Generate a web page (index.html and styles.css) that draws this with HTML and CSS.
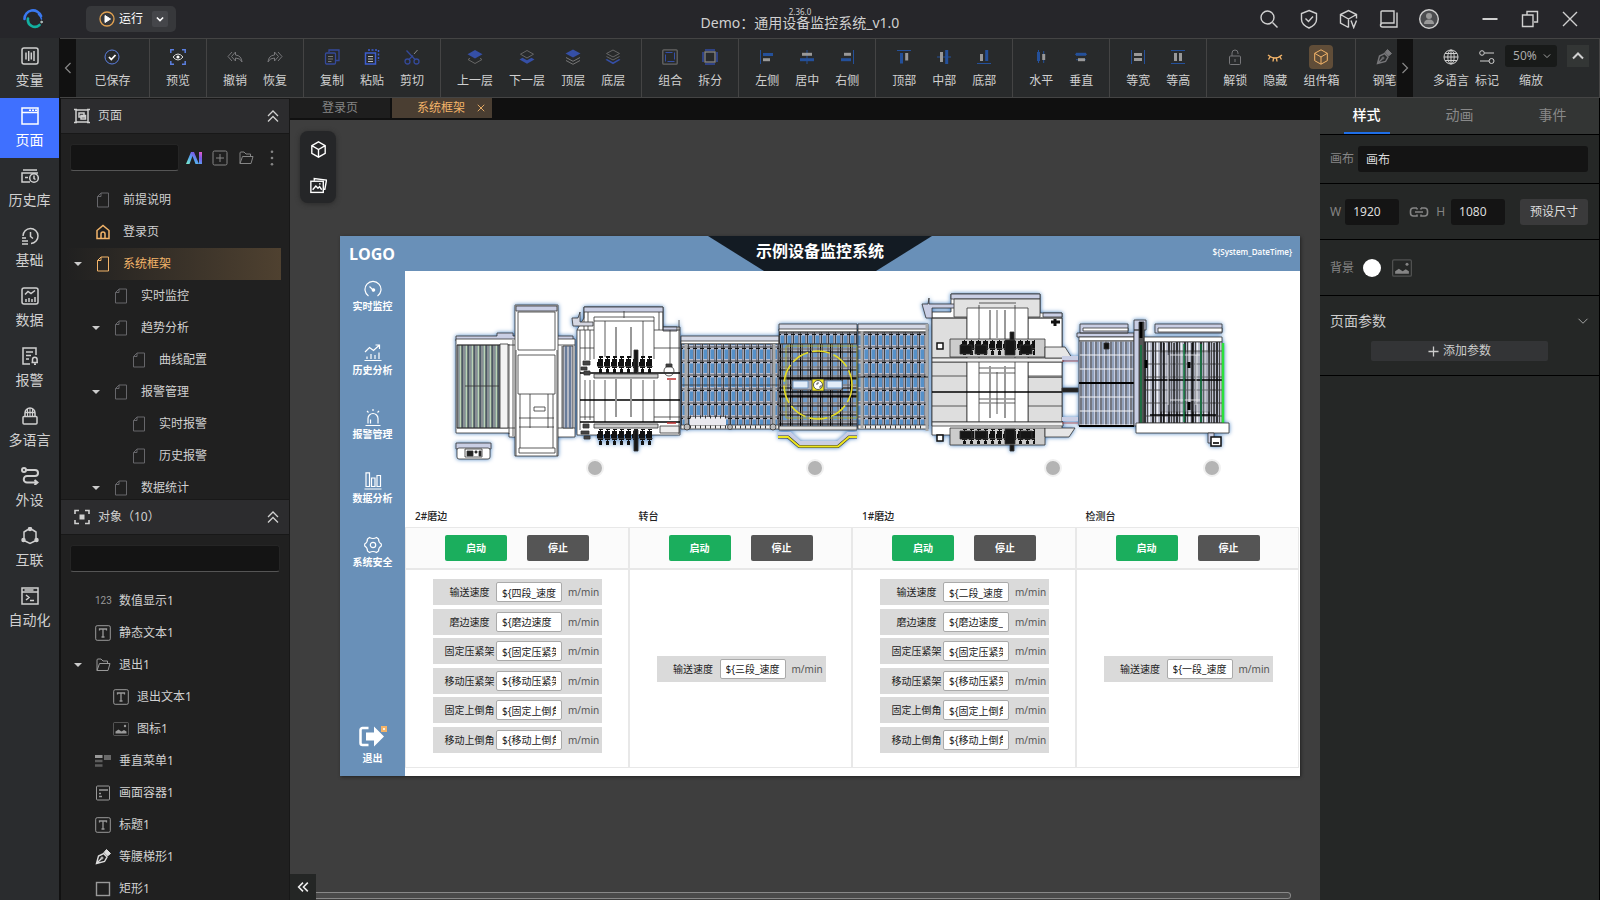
FILE: index.html
```html
<!DOCTYPE html>
<html lang="zh-CN">
<head>
  <meta charset="UTF-8">
  <title>Demo：通用设备监控系统_v1.0</title>
  <meta name="viewport" content="width=device-width, initial-scale=1.0">
  <link rel="stylesheet" href="styles.css">
</head>
<body>
  <!-- icon sprite -->
  <svg class="sprite" aria-hidden="true">
    <defs>
      <linearGradient id="ai-fill" x1="0" x2="1" y1="1" y2="0">
        <stop offset="0" stop-color="#7df0c8"/><stop offset=".4" stop-color="#56a8f0"/><stop offset=".7" stop-color="#7a5ae8"/><stop offset="1" stop-color="#f05ac8"/>
      </linearGradient>
    </defs>
    <symbol id="i-file" viewBox="0 0 16 16"><path d="M6 1h7.500v14h-11V4.500zM6 1v3.500H2.500" /></symbol>
    <symbol id="i-home" viewBox="0 0 16 16"><path d="M2 6.500L8 1.500l6 5V14.500H2zM6 14.500V10a2 2 0 0 1 4 0v4.500" stroke-width="1.500"/></symbol>
    <symbol id="i-text" viewBox="0 0 16 16"><rect x=".7" y=".7" width="14.600" height="14.600" rx="1.500"/><path d="M4.500 5.500V4h7v1.500M8 4v8M6.500 12h3" stroke-width="1.300"/></symbol>
    <symbol id="i-folder" viewBox="0 0 16 16"><path d="M2 13.500V3a1 1 0 0 1 1-1h3l2 2h4.500v2.500M2 13.500l2.500-7h10.500l-2 7z"/></symbol>
    <symbol id="i-image" viewBox="0 0 16 16"><rect x=".5" y="1.500" width="15" height="13" rx="1" opacity=".45"/><path d="M2.500 12.500v-2l3-2 3 2 2.500-1.500 2.500 1.500v2z" fill="currentColor" stroke="none"/><circle cx="12" cy="5" r="1.200" fill="currentColor" stroke="none"/></symbol>
    <symbol id="i-pen" viewBox="0 0 16 16"><path d="M1.500 14.500L3.500 7l5-2.500 3.500 3.500-2.500 4.500zM1.500 14.500L6.500 9.500" stroke-width="1.400"/><circle cx="7" cy="9" r="1"/><path d="M9 3.500l2.500-3 4 4-3 2.500z" fill="currentColor"/></symbol>
    <symbol id="i-rect" viewBox="0 0 16 16"><rect x="1.500" y="1.500" width="13" height="13" stroke-width="1.400"/></symbol>
    <symbol id="i-box" viewBox="0 0 16 16"><rect x="1.500" y="1" width="13" height="14" rx="1"/><path d="M4 5h9M4 8.500h2M4 11.500h3" stroke-width="1.400"/></symbol>
    <symbol id="i-vmenu" viewBox="0 0 16 16"><path d="M0 3.500h7.500" stroke-width="3"/><path d="M0 8h7.500M0 12.500h7.500" stroke-width="2.500" opacity=".5"/><path d="M9 4.500h7" stroke-width="5" opacity=".6"/></symbol>
    <symbol id="i-cube" viewBox="0 0 16 16"><path d="M8 .8l6.300 3.500v7.400L8 15.200l-6.300-3.500V4.300zM1.700 4.300L8 8l6.300-3.700M8 8v7.200"/></symbol>
    <symbol id="i-photos" viewBox="0 0 16 16"><path d="M4 3.500V1.500l11.500 1.500-1.500 8.500h-1.500"/><rect x=".8" y="4" width="11.700" height="10.500"/><path d="M2.500 12l3-3.500 2 2 1.500-1.500 2 3M8.500 6.500h1.500"/></symbol>
    <symbol id="i-plus-box" viewBox="0 0 16 16"><rect x="1" y="1" width="14" height="14" rx="1.500"/><path d="M8 4v8M4 8h8"/></symbol>
    <symbol id="i-dots" viewBox="0 0 16 16"><g fill="currentColor" stroke="none"><circle cx="8" cy="1.800" r="1.300"/><circle cx="8" cy="8" r="1.300"/><circle cx="8" cy="14.200" r="1.300"/></g></symbol>
    <symbol id="i-up2" viewBox="0 0 16 16"><path d="M3 8l5-5 5 5M3 13.500l5-5 5 5" stroke-width="1.300"/></symbol>
    <symbol id="i-down" viewBox="0 0 16 16"><path d="M3 5.500l5 5 5-5" stroke-width="1.500"/></symbol>
    <symbol id="i-up" viewBox="0 0 16 16"><path d="M3 10.500l5-5 5 5" stroke-width="2"/></symbol>
    <symbol id="i-left" viewBox="0 0 8 16"><path d="M6.500 3L1.500 8l5 5" stroke-width="1.200"/></symbol>
    <symbol id="i-right" viewBox="0 0 8 16"><path d="M1.500 3l5 5-5 5" stroke-width="1.200"/></symbol>
    <symbol id="i-close" viewBox="0 0 16 16"><path d="M1.500 1.500l13 13M14.500 1.500l-13 13" stroke-width="1.800"/></symbol>
    <symbol id="i-link" viewBox="0 0 20 12"><path d="M8 2H4.500a3 3 0 0 0-3 3v2a3 3 0 0 0 3 3H8V8.500M8 2v1.500M12 2h3.500a3 3 0 0 1 3 3v2a3 3 0 0 1-3 3H12V8.500M12 2v1.500M6 6h8" stroke-width="1.600"/></symbol>

    <symbol id="i-layer-up" viewBox="0 0 16 16"><path d="M1 10.500l7 4 7-4-2-1.200M1 10.500l2-1.200" stroke="#666"/><path d="M8 1l7.500 4.200L8 9.400.5 5.200z" fill="#354fa6" stroke="none"/></symbol>
    <symbol id="i-layer-down" viewBox="0 0 16 16"><path d="M8 1.500l6.500 3.700L8 9 1.500 5.200z" stroke="#666"/><path d="M.5 10.500l3-1.700L8 11.300l4.500-2.500 3 1.700L8 14.800z" fill="#354fa6" stroke="none"/></symbol>
    <symbol id="i-layer-top" viewBox="0 0 16 16"><path d="M1 8.500l7 3.800 7-3.800M1 11.500l7 3.800 7-3.800" stroke="#777"/><path d="M8 .5l7.500 4L8 8.500.5 4.500z" fill="#354fa6" stroke="none"/></symbol>
    <symbol id="i-layer-bottom" viewBox="0 0 16 16"><path d="M8 1l6.500 3.500L8 8 1.500 4.500zM1.500 7.500L8 11l6.500-3.500" stroke="#666"/><path d="M.5 10.800l1.500-.8 6 3.200 6-3.200 1.500.8L8 15.200z" fill="#354fa6" stroke="none"/></symbol>
    <symbol id="i-lock" viewBox="0 0 16 16"><rect x="2.500" y="7" width="11" height="8.500" rx="1"/><path d="M5 7V4a3 3 0 0 1 6 0v1M8 10v3"/></symbol>
    <symbol id="i-globe" viewBox="0 0 16 16"><circle cx="8" cy="8" r="7"/><ellipse cx="8" cy="8" rx="3.200" ry="7"/><path d="M1 8h14M2 4.500h12M2 11.500h12M8 1v14"/></symbol>
  </svg>

  <header class="titlebar">
    <svg class="brand" viewBox="0 0 20 20"><path d="M1.500 10a8.500 8.500 0 0 1 16.500-3" stroke="#3a78f0" stroke-width="2.600"/><path d="M15.500 5.500A8 8 0 0 1 18.500 10" stroke="#3a78f0" stroke-width="1.500"/><path d="M5 9.500a7 7 0 0 0 11.500 6.500" stroke="#12b0a0" stroke-width="2.600"/><circle cx="18.500" cy="13" r=".8" fill="#12b0a0"/></svg>
    <div class="run">
      <button class="run-btn" type="button">
        <svg class="icon" viewBox="0 0 16 16"><circle cx="8" cy="8" r="7" stroke="#e0a050" stroke-width="1.300"/><path d="M6 4.500l5.500 3.500L6 11.500z" fill="#fff"/></svg>运行
      </button>
      <button class="run-more" type="button" aria-label="更多"><svg class="icon-s" viewBox="0 0 16 16"><path d="M3 5.500l5 5 5-5" stroke-width="2.500"/></svg></button>
    </div>
    <div class="doc-title">
      <span class="version">2.36.0</span>
      <h1>Demo：通用设备监控系统_v1.0</h1>
    </div>
    <div class="window-actions">
      <button type="button" aria-label="搜索"><svg viewBox="0 0 20 20"><circle cx="8.500" cy="8.500" r="6.500"/><path d="M13.500 13.500l5 5"/></svg></button>
      <button type="button" aria-label="安全"><svg viewBox="0 0 20 20"><path d="M10 1.500l7.500 3v6q0 5-7.500 8.500-7.500-3.500-7.500-8.500v-6zM6.500 9.500L9.500 12.500l4.500-5"/></svg></button>
      <button type="button" aria-label="组件"><svg viewBox="0 0 20 20"><path d="M17.500 9.500V5.500L9.500 1.500l-8 4V14l8 4.500M1.500 5.500l8 4.500 8-4.500M9.500 10v8.500M12 11.500l2.700 7 2.800-7"/></svg></button>
      <button type="button" aria-label="文档"><svg viewBox="0 0 20 20"><path d="M2 16V3a1 1 0 0 1 1-1h12v12H3.500a1.500 1.500 0 0 0 0 4H18V3.500"/></svg></button>
      <button type="button" aria-label="账户"><svg viewBox="0 0 20 20"><circle cx="10" cy="10" r="9.300" fill="#4c4d50"/><circle cx="10" cy="7" r="3" fill="#999" stroke="none"/><path d="M5 15q0-4.500 5-4.500t5 4.500z" fill="#999" stroke="none"/></svg></button>
      <button class="win-first" type="button" aria-label="最小化"><svg viewBox="0 0 20 20"><path d="M2.500 10h15" stroke-width="2"/></svg></button>
      <button type="button" aria-label="还原"><svg viewBox="0 0 20 20"><path d="M7 6V2.500h10.500v10.500H14M2.500 6H13v11.500H2.500z"/></svg></button>
      <button type="button" aria-label="关闭"><svg viewBox="0 0 20 20"><path d="M3 3l14 14M17 3L3 17"/></svg></button>
    </div>
  </header>

  <div class="app">
    <nav class="side-nav">
      <button type="button"><svg viewBox="0 0 18 18"><rect x="1" y="1" width="16" height="16" rx="2"/><path d="M5 5.500v7M7.700 4v10M10.300 5.500v7M13 4v10"/></svg>变量</button>
      <button type="button" class="active"><svg viewBox="0 0 18 18"><rect x="1" y="1" width="16" height="16"/><path d="M1 5.500h16M8 3.300h2M11 3.300h2M14 3.300h2"/></svg>页面</button>
      <button type="button"><svg viewBox="0 0 18 18"><path d="M2 3h14M9 15H1V6h16M4 10.500h3"/><circle cx="13" cy="11" r="4.300"/><path d="M13 8.500v3l1.500 1"/></svg>历史库</button>
      <button type="button"><svg viewBox="0 0 18 18"><path d="M2 9a7.500 7.500 0 1 1 8 7.500M1 11h4M1 14h6M1 17h6M9.500 5v4.500l2.500 2"/></svg>基础</button>
      <button type="button"><svg viewBox="0 0 18 18"><rect x="1" y="1" width="16" height="16" rx="2"/><path d="M4 7.500l3-3 3 2 4-3M5 15v-3M8 15v-4M11 15v-3M14 15v-5"/></svg>数据</button>
      <button type="button"><svg viewBox="0 0 18 18"><path d="M9 17H2V1h13v7M5 5h7M5 8.500h5M5 12h3M10.500 15.500h6.500M11.500 15.500v-3a2.300 2.300 0 0 1 4.600 0v3M13 17.300h2"/></svg>报警</button>
      <button type="button"><svg viewBox="0 0 18 18"><path d="M3 9.500h12a1 1 0 0 1 1 1V16a1 1 0 0 1-1 1H3a1 1 0 0 1-1-1v-5.500a1 1 0 0 1 1-1zM4 9V6a5 5 0 0 1 10 0v3M4 5.500h10"/><path d="M9 1v8M6.500 2v7M11.500 2v7" stroke-width="1"/></svg>多语言</button>
      <button type="button"><svg viewBox="0 0 18 18" class="bold"><circle cx="3" cy="3" r="2"/><path d="M5 3h9a3 3 0 0 1 0 6H6a3 3 0 0 0 0 6.500h10M13.500 13l3 2.500-3 2.500"/></svg>外设</button>
      <button type="button"><svg viewBox="0 0 18 18"><path d="M7 2.500L3 5v6M11 2.500L15 5v6M4 14l5 2.500 5-2.500"/><g fill="currentColor"><circle cx="9" cy="2" r="1.500"/><circle cx="2.500" cy="13" r="1.500"/><circle cx="15.500" cy="13" r="1.500"/></g></svg>互联</button>
      <button type="button"><svg viewBox="0 0 18 18"><path d="M1 1h16v16H1zM1 5h16M3.500 3h9M5 8l3 2.500L5 13M9 13.500h4"/></svg>自动化</button>
    </nav>

    <div class="content">
      <div class="toolbar">
        <button class="scroll-btn" type="button" aria-label="向左"><svg class="chev" viewBox="0 0 8 16"><use href="#i-left"/></svg></button>
        <div class="tools">
          <div class="group first">
            <button type="button"><svg viewBox="0 0 16 16"><circle cx="8" cy="8" r="7" stroke="#5b7fe0"/><path d="M5 8l2.300 2.500L11.500 6" stroke="#fff" stroke-width="1.800"/></svg>已保存</button>
          </div>
          <div class="group">
            <button type="button"><svg viewBox="0 0 16 16"><path d="M.8 4V.8H4M12 .8h3.200V4M15.200 12v3.200H12M4 15.200H.8V12" stroke="#5b7fe0" stroke-width="1.500"/><path d="M3 8q5-6 10 0-5 6-10 0z" stroke="#ddd"/><circle cx="8" cy="8" r="1.600" fill="#fff" stroke="none"/></svg>预览</button>
          </div>
          <div class="group">
            <button type="button"><svg class="dim" viewBox="0 0 16 16"><path d="M5 3L1 7.500 5 12M8.500 3L4.500 7.500l4 4.500V9q5 0 6.500 4-.5-6.500-6.500-7z"/></svg>撤销</button>
            <button type="button"><svg class="dim" viewBox="0 0 16 16"><path d="M11 3l4 4.500-4 4.500M7.500 3l4 4.500-4 4.500V9Q2.500 9 1 13q.5-6.500 6.500-7z"/></svg>恢复</button>
          </div>
          <div class="group">
            <button type="button"><svg viewBox="0 0 16 16"><path d="M5 3V1h10v10.500h-3" stroke="#34499a" stroke-width="1.300"/><rect x="1.500" y="4" width="10" height="11" rx="1" stroke="#34499a" stroke-width="1.300"/><path d="M4 7.500h5M4 10h5M4 12.500h3.500" stroke="#777"/></svg>复制</button>
            <button type="button"><svg viewBox="0 0 16 16"><path d="M4 1h10.500v11" stroke="#3d5ed0" stroke-width="1.500" stroke-dasharray="2 1.500"/><rect x="1.500" y="4" width="10" height="11" stroke="#3d5ed0" stroke-width="1.500"/><path d="M4 7.500h5M4 10h5M4 12.500h5" stroke="#bbb"/></svg>粘贴</button>
            <button type="button"><svg viewBox="0 0 16 16"><circle cx="3.500" cy="12.500" r="2.500" stroke="#34499a" stroke-width="1.300"/><circle cx="12.500" cy="12.500" r="2.500" stroke="#34499a" stroke-width="1.300"/><path d="M2.500 1.500l8.500 9M5 10.500L9 6.500" stroke="#34499a" stroke-width="1.300"/><path d="M10 5l3.500-4" stroke="#888"/></svg>剪切</button>
          </div>
          <div class="group">
            <button type="button"><svg viewBox="0 0 16 16"><use href="#i-layer-up"/></svg>上一层</button>
            <button type="button"><svg viewBox="0 0 16 16"><use href="#i-layer-down"/></svg>下一层</button>
            <button type="button"><svg viewBox="0 0 16 16"><use href="#i-layer-top"/></svg>顶层</button>
            <button type="button"><svg viewBox="0 0 16 16"><use href="#i-layer-bottom"/></svg>底层</button>
          </div>
          <div class="group">
            <button type="button"><svg viewBox="0 0 16 16"><rect x=".8" y=".8" width="14.400" height="14.400" rx="1" stroke="#666" stroke-width="1.300"/><rect x="3.500" y="3.500" width="9" height="9" stroke="#3550a8" stroke-dasharray="7 2"/></svg>组合</button>
            <button type="button"><svg viewBox="0 0 16 16"><path d="M3 1h10M3 15h10M1 3v10M15 3v10" stroke="#2f4284" stroke-width="2"/><rect x="3" y="3" width="10" height="10" stroke="#888" stroke-width="1.300"/></svg>拆分</button>
          </div>
          <div class="group">
            <button type="button"><svg viewBox="0 0 16 16"><path d="M1.500 1v14" stroke="#24509a"/><path d="M4 5.500h10" stroke="#24509a" stroke-width="3"/><path d="M4 10.700h7" stroke="#999" stroke-width="3"/></svg>左侧</button>
            <button type="button"><svg viewBox="0 0 16 16"><path d="M8 1v14" stroke="#24509a"/><path d="M3 5.300h10" stroke="#999" stroke-width="3"/><path d="M1 10.700h14" stroke="#24509a" stroke-width="3"/></svg>居中</button>
            <button type="button"><svg viewBox="0 0 16 16"><path d="M14.500 1v14" stroke="#24509a"/><path d="M5 5.300h7" stroke="#999" stroke-width="3"/><path d="M2 10.700h10" stroke="#24509a" stroke-width="3"/></svg>右侧</button>
          </div>
          <div class="group">
            <button type="button"><svg viewBox="0 0 16 16"><path d="M1 1.500h14" stroke="#24509a"/><path d="M5.500 4v10.500" stroke="#24509a" stroke-width="3"/><path d="M10.700 4v7.500" stroke="#999" stroke-width="3"/></svg>顶部</button>
            <button type="button"><svg viewBox="0 0 16 16"><path d="M1 8h14" stroke="#24509a"/><path d="M5.500 3v10" stroke="#999" stroke-width="3"/><path d="M10.700 1v14" stroke="#24509a" stroke-width="3"/></svg>中部</button>
            <button type="button"><svg viewBox="0 0 16 16"><path d="M1 14.500h14" stroke="#24509a"/><path d="M5.500 5v7" stroke="#999" stroke-width="3"/><path d="M10.700 1v11" stroke="#24509a" stroke-width="3"/></svg>底部</button>
          </div>
          <div class="group">
            <button type="button"><svg viewBox="0 0 16 16"><path d="M5.500 1v13" stroke="#24509a"/><path d="M5.500 3v9" stroke="#24509a" stroke-width="3"/><path d="M10.700 2v12" stroke="#24509a"/><path d="M10.700 5v6" stroke="#999" stroke-width="3"/></svg>水平</button>
            <button type="button"><svg viewBox="0 0 16 16"><path d="M2 5.300h12M3 10.700h10" stroke="#24509a"/><path d="M3 5.300h10" stroke="#24509a" stroke-width="3"/><path d="M5 10.700h7" stroke="#999" stroke-width="3"/></svg>垂直</button>
          </div>
          <div class="group">
            <button type="button"><svg viewBox="0 0 16 16"><path d="M1.500 1v14M14.500 1v14" stroke="#24509a"/><path d="M4 5.500h8M4 10.500h8" stroke="#999" stroke-width="3"/></svg>等宽</button>
            <button type="button"><svg viewBox="0 0 16 16"><path d="M1 1.500h14M1 14.500h14" stroke="#24509a"/><path d="M5.500 4v8M10.500 4v8" stroke="#999" stroke-width="3"/></svg>等高</button>
          </div>
          <div class="group">
            <button type="button"><svg class="dim" viewBox="0 0 16 16"><use href="#i-lock"/></svg>解锁</button>
            <button type="button"><svg class="gold" viewBox="0 0 16 16"><path d="M1 6q7 6 14 0M3 8l-1.500 2.500M6.500 9.500l-.5 3M9.500 9.500l.5 3M13 8l1.500 2.500" stroke-width="1.400"/></svg>隐藏</button>
            <button type="button"><span class="lit"><svg class="gold" viewBox="0 0 16 16"><use href="#i-cube"/></svg></span>组件箱</button>
          </div>
          <div class="group">
            <button type="button"><svg class="dim" viewBox="0 0 16 16"><use href="#i-pen"/></svg>钢笔</button>
          </div>
        </div>
        <button class="scroll-btn" type="button" aria-label="向右"><svg class="chev" viewBox="0 0 8 16"><use href="#i-right"/></svg></button>
        <div class="view-tools">
          <button type="button"><svg viewBox="0 0 16 16"><use href="#i-globe"/></svg>多语言</button>
          <button type="button"><svg viewBox="0 0 16 16"><circle cx="3" cy="4" r="2.300"/><path d="M5.500 4H15M1 12h9"/><circle cx="12.500" cy="12" r="2.500"/></svg>标记</button>
          <label class="zoom">
            <span class="zoom-box">
              <select><option>50%</option></select>
              <svg class="icon-s" viewBox="0 0 16 16"><use href="#i-down"/></svg>
            </span>
            缩放
          </label>
          <button class="fold" type="button" aria-label="收起"><svg class="icon" viewBox="0 0 16 16"><use href="#i-up"/></svg></button>
        </div>
      </div>

      <div class="workbench">
        <aside class="left-panel">
          <section class="pages">
            <h2 class="panel-head"><svg class="icon" viewBox="0 0 16 16"><rect x="2" y="2" width="12" height="12" stroke-width="1.500"/><path d="M0 1.500h3M13 1.500h3M0 14.500h3M13 14.500h3M5 5h5v4H5zM7 7.500h4.500V11H7z" stroke-width="1.500"/></svg>页面
              <button class="fold-panel" type="button" aria-label="折叠"><svg class="icon" viewBox="0 0 16 16"><use href="#i-up2"/></svg></button></h2>
            <div class="search-row">
              <input type="text" aria-label="搜索页面">
              <button type="button" aria-label="AI"><svg viewBox="0 0 16 16" class="icon"><path d="M0 14L5 2h3l5 12h-3.500L6.500 6 3.500 14zM13 2h3v12h-3z" fill="url(#ai-fill)" stroke="none"/></svg></button>
              <button type="button" aria-label="新建页面"><svg viewBox="0 0 16 16" class="icon"><use href="#i-plus-box"/></svg></button>
              <button type="button" aria-label="新建文件夹"><svg viewBox="0 0 16 16" class="icon"><use href="#i-folder"/></svg></button>
              <button type="button" aria-label="更多"><svg viewBox="0 0 16 16" class="icon"><use href="#i-dots"/></svg></button>
            </div>
            <ul class="tree">
              <li><i class="caret none"></i><svg class="icon faint"><use href="#i-file"/></svg>前提说明</li>
              <li><i class="caret none"></i><svg class="icon gold"><use href="#i-home"/></svg>登录页</li>
              <li class="active"><i class="caret"></i><svg class="icon gold"><use href="#i-file"/></svg>系统框架</li>
              <li class="l1"><i class="caret none"></i><svg class="icon faint"><use href="#i-file"/></svg>实时监控</li>
              <li class="l1"><i class="caret"></i><svg class="icon faint"><use href="#i-file"/></svg>趋势分析</li>
              <li class="l2"><i class="caret none"></i><svg class="icon faint"><use href="#i-file"/></svg>曲线配置</li>
              <li class="l1"><i class="caret"></i><svg class="icon faint"><use href="#i-file"/></svg>报警管理</li>
              <li class="l2"><i class="caret none"></i><svg class="icon faint"><use href="#i-file"/></svg>实时报警</li>
              <li class="l2"><i class="caret none"></i><svg class="icon faint"><use href="#i-file"/></svg>历史报警</li>
              <li class="l1"><i class="caret"></i><svg class="icon faint"><use href="#i-file"/></svg>数据统计</li>
            </ul>
          </section>
          <section class="objects">
            <h2 class="panel-head"><svg class="icon" viewBox="0 0 16 16"><path d="M1 5V1.500h4M11 1.500h4V5M15 11v3.500h-4M5 14.500H1V11" stroke-width="1.600"/><rect x="5.500" y="5.500" width="5" height="5" fill="currentColor" stroke="none"/></svg>对象（10）
              <button class="fold-panel" type="button" aria-label="折叠"><svg class="icon" viewBox="0 0 16 16"><use href="#i-up2"/></svg></button></h2>
            <div class="search-row"><input type="text" aria-label="搜索对象"></div>
            <ul class="tree tight">
              <li><i class="caret none"></i><span class="num">123</span>数值显示1</li>
              <li><i class="caret none"></i><svg class="icon"><use href="#i-text"/></svg>静态文本1</li>
              <li><i class="caret"></i><svg class="icon"><use href="#i-folder"/></svg>退出1</li>
              <li class="l1"><i class="caret none"></i><svg class="icon"><use href="#i-text"/></svg>退出文本1</li>
              <li class="l1"><i class="caret none"></i><svg class="icon"><use href="#i-image"/></svg>图标1</li>
              <li><i class="caret none"></i><svg class="icon"><use href="#i-vmenu"/></svg>垂直菜单1</li>
              <li><i class="caret none"></i><svg class="icon"><use href="#i-box"/></svg>画面容器1</li>
              <li><i class="caret none"></i><svg class="icon"><use href="#i-text"/></svg>标题1</li>
              <li><i class="caret none"></i><svg class="icon bright"><use href="#i-pen"/></svg>等腰梯形1</li>
              <li><i class="caret none"></i><svg class="icon"><use href="#i-rect"/></svg>矩形1</li>
            </ul>
          </section>
        </aside>

        <main class="stage">
          <div class="tabs">
            <button type="button">登录页</button>
            <button type="button" class="active">系统框架<svg viewBox="0 0 16 16"><use href="#i-close"/></svg></button>
          </div>
          <div class="board">
            <div class="float-tools">
              <button type="button" aria-label="模型"><svg viewBox="0 0 16 16"><use href="#i-cube"/></svg></button>
              <button type="button" aria-label="图库"><svg viewBox="0 0 16 16"><use href="#i-photos"/></svg></button>
            </div>

            <div class="screen">
              <div class="screen-head">
                <strong class="logo">LOGO</strong>
                <div class="banner"><span>示例设备监控系统</span></div>
                <span class="clock">${System_DateTime}</span>
              </div>
              <div class="screen-menu">
                <a href="#"><svg viewBox="0 0 18 18"><path d="M4.500 16A8 8 0 1 1 13.500 16M5.500 6.500L9 10"/><circle cx="9.500" cy="10" r="1.200" fill="#fff"/></svg>实时监控</a>
                <a href="#"><svg viewBox="0 0 18 18"><path d="M1 8l4.500-4.500 4 3L15.500 1M11.500 1h4v4M.5 16.500h17M3 15v-2.500M7 15v-5M11 15v-4M15 15V8.500"/></svg>历史分析</a>
                <a href="#"><svg viewBox="0 0 18 18"><path d="M4 15.500V10.500a5 5 0 0 1 10 0v5M1.500 17.500h15M9 1v2M3 3l1.500 1.500M15 3l-1.500 1.500M6.500 15.500v-4"/></svg>报警管理</a>
                <a href="#"><svg viewBox="0 0 18 18"><path d="M2 .8h3.500v13.700H2zM7.500 6h3.500v8.500H7.500zM13 3.500h3.500v11H13zM.5 17h17"/></svg>数据分析</a>
                <a href="#"><svg viewBox="0 0 18 18"><path d="M5.500 1.500q3.500 2 7 0l2 1.500q0 3.500 2.800 5v2q-2.800 1.500-2.800 5l-2 1.500q-3.500-2-7 0l-2-1.500q0-3.500-2.800-5V8q2.800-1.500 2.800-5z"/><circle cx="9" cy="9" r="2.700"/></svg>系统安全</a>
                <a href="#" class="exit"><svg viewBox="0 0 30 24"><path d="M10.500 4H4.500a2 2 0 0 0-2 2v13a2 2 0 0 0 2 2h6" stroke-width="2.500"/><path d="M8 8.500h8V2.500L26 12.500l-10 10v-6H8z" fill="#fff" stroke="none"/><path d="M23 2h6v6h-6z" fill="#f3b469" stroke="none"/><path d="M25 5h2M26 4v2"/></svg>退出</a>
              </div>
              <div class="screen-body">
                <!-- production line, drawn in plan view -->
                <svg class="line" viewBox="405 271 895 230">
                  <defs>
                    <pattern id="p-green" width="6" height="10" patternUnits="userSpaceOnUse" x="457"><path d="M0 0h6v10H0z" fill="#5d7286"/><path d="M1 0v10" stroke="#999" stroke-width="1.500"/><path d="M3.500 0v10" stroke="#bcd3b6" stroke-width="2"/><path d="M5 0v10" stroke="#333" stroke-width=".8"/></pattern>
                    <pattern id="p-roll" width="7" height="14" patternUnits="userSpaceOnUse" x="681" y="348"><path d="M0 0h7v14H0z" fill="#b9bfd2"/><path d="M1.500 1.500h3.500v9.500h-3.500z" fill="#5590c8"/><path d="M.5 0v14" stroke="#333" stroke-width=".9"/><path d="M5.800 0v14" stroke="#6b6d78" stroke-width="1"/><path d="M0 .5h2M5 .5h2" stroke="#111"/><path d="M0 13h7" stroke="#444" stroke-width="1"/></pattern>
                    <pattern id="p-table" width="10" height="9" patternUnits="userSpaceOnUse" x="780" y="342"><path d="M0 0h10v9H0z" fill="#a9adbb"/><path d="M3 2h4v4H3z" fill="#6c9ccd"/><path d="M.5 0v9" stroke="#000" stroke-width="1.300"/><path d="M2.500 0v9M8 0v9" stroke="#444" stroke-width=".8"/><path d="M0 1h10" stroke="#000" stroke-width="1"/><path d="M0 7h10" stroke="#555" stroke-width=".8"/></pattern>
                    <pattern id="p-thin" width="5" height="14" patternUnits="userSpaceOnUse" x="1080" y="343"><path d="M0 0h5v14H0z" fill="#c6cce0"/><path d="M1 0v14" stroke="#222"/><path d="M3 0v14" stroke="#5f7898" stroke-width="1"/><path d="M0 12h5" stroke="#f4f4f8"/></pattern>
                    <pattern id="p-dense" width="8" height="13" patternUnits="userSpaceOnUse" x="1144" y="342"><path d="M0 0h8v13H0z" fill="#b9bdcc"/><path d="M1 0v13" stroke="#000" stroke-width="1.500"/><path d="M3.500 0v13" stroke="#444"/><path d="M5.500 0v13" stroke="#f2f2f5" stroke-width="1.200"/><path d="M0 9h8" stroke="#333" stroke-width=".8"/></pattern>
                    <pattern id="p-motor" width="7" height="18" patternUnits="userSpaceOnUse" x="597" y="356"><path d="M1 3h5v9H1zM0 6h2v4H0zM2 0h4v2H2zM2 13h3v4H2z" fill="#111"/><path d="M3.500 1v14" stroke="#111"/><path d="M0 10.500h7" stroke="#555" stroke-width=".6"/></pattern>
                    <pattern id="p-motor-low" href="#p-motor" y="428"/>
                  </defs>
                  <g class="glow">
                    <!-- infeed conveyor and loader -->
                    <path d="M456 336h41v-3h16v3h60v5H456z" fill="#c9cee4"/>
                    <path d="M456 339h119v98h-66v-4h-53z" fill="#fff"/>
                    <path d="M457 345h43v83h-43z" fill="url(#p-green)"/>
                    <path d="M465 386h34M509 344v90M513 340v96M562 346v82M457 345h118M457 428h118"/>
                    <path d="M500 344h8v84h-8z" fill="#f4f4f4"/>
                    <path d="M563 346h10v82h-10z" fill="#b4b8c4"/>
                    <path d="M566 346v82M570 346v82" stroke="#50688c" stroke-width="1.500"/>
                    <path d="M515 305h43v151h-43z" fill="#fff"/>
                    <path d="M516 306h41v5h-41z" fill="#c9cee4"/>
                    <path d="M518 312h37v38h-37zM518 355h37v39h-37zM516 350v106M520 394v54M553 394v54M557 350v106M530 394v34M548 394v34M534 407h11v4h-11zM519 418h35M519 427h35M519 448h36v5h-36z"/>
                    <path d="M456 443h35v6h-35z" fill="#c9cee4"/>
                    <rect x="457" y="448" width="33" height="11" rx="2" fill="#fff"/>
                    <path d="M465 449h17v8h-17z"/><path d="M467 451h6v5h-6zM475 451h2v2h-2zM479 451h2v5h-2z" fill="#222"/>

                    <!-- edge grinder 2 -->
                    <path d="M584 307h79v20h17v108H577V330l7-12z" fill="#fff"/>
                    <path d="M584 307h79v5h-79zM663 327h14v4h-14z" fill="#c9cee4"/>
                    <path d="M584 312v18M588 312v18M624 311v7M659 312v18M663 312v18M594 317h60v4h-60zM594 321v38M654 321v38M594 380v42M654 380v42M605 321v36M605 380v42M643 321v36M643 380v42M580 330v100M585 330v30M590 330v30M585 380v40M590 380v40M670 330v35M670 380v40M679 320v114M577 330h17M654 330h26M580 348h14M654 348h26M580 417h14M654 417h26"/>
                    <path d="M580 400h100M580 373h100M580 422h100" stroke="#000" stroke-width="1.300"/>
                    <path d="M616 327v31M631 327v31M616 379v38M631 379v38" stroke="#999" stroke-width="2"/>
                    <path d="M594 374h64v4h-64zM594 424h64v4h-64z" fill="#ccc"/>
                    <path d="M572 318h6l2-6v10h13v4h-20z" fill="#d5d7e2"/>
                    <path d="M597 356h56v17h-56z" fill="url(#p-motor)" stroke="none"/>
                    <path d="M597 429h56v16h-56z" fill="url(#p-motor-low)" stroke="none"/>
                    <path d="M634 350h4v22h-4zM634 430h4v21h-4z" fill="#161616"/>
                    <path d="M583 361h7v4h-7zM581 367h6v3h-6zM584 371h6v4h-6zM583 424h6v4h-6zM581 431h8v3h-8zM584 436h6v3h-6zM666 364h6v3h-6z" fill="#444"/>
                    <circle cx="669" cy="371" r="5"/>
                    <path d="M667 379h9M667 423h9" stroke="#c03030" stroke-width="1.500"/>
                    <path d="M660 426h19v7h-19z" fill="#eee"/>

                    <!-- transfer conveyor -->
                    <path d="M681 336h98v9h-98z" fill="#d4d8e6"/>
                    <path d="M681 341h98v3h-98z" fill="#fff"/>
                    <path d="M681 344h98v82h-98z" fill="url(#p-roll)"/>
                    <path d="M681 425h98v4h-98z" fill="#eee"/>
                    <path d="M686 344v85M774 344v85" stroke="#aaa" stroke-width="3"/>
                    <path d="M730 344v85M681 385h98" stroke="#333"/>
                    <path d="M690 417h36v8h-36z" fill="#e9e9ee" stroke="none"/>
                    <path d="M690 417h36M690 427h84" stroke-width="3" stroke-dasharray="1 4"/>
                    <circle cx="687" cy="427" r="3" fill="#bbb"/><circle cx="730" cy="427" r="2.500" fill="#bbb"/><circle cx="773" cy="427" r="3" fill="#bbb"/>

                    <!-- turntable -->
                    <path d="M779 324h78v7h-78z" fill="#d4d8e6"/>
                    <path d="M779 329h78v3h-78z" fill="#fff"/>
                    <path d="M779 332h78v12h-78z" fill="url(#p-roll)"/>
                    <path d="M779 344h78v84h-78z" fill="url(#p-table)"/>
                    <path d="M779 426h78v4h-78z" fill="#ddd"/>
                    <path d="M792 380h50v10h-50z" fill="#a9adbb"/>
                    <path d="M793 381h15v7h-15zM827 381h15v7h-15z" fill="#e2ecf8" stroke="#5d8ebf"/>
                    <path d="M779 378h78M779 392h78M779 396h78" stroke="#000" stroke-width="1.300"/>
                    <path d="M786 346h71v72h-71z" stroke="#a8a820"/>
                    <circle cx="818" cy="385" r="34" stroke="#e5dc20" stroke-width="1.500" stroke-dasharray="18 4"/>
                    <path d="M812 379h12v12h-12z" fill="#f4ea20"/><circle cx="818" cy="385" r="4.500" fill="#fff"/><path d="M816 384h2v-2M819 387h2v-2"/>
                    <path d="M778 434h12l10 9h38l10-9h9" stroke="#c9cee4" stroke-width="4"/>
                    <path d="M778 437h10l11 9.500h39l11-9.500h8" stroke="#333" stroke-width="3"/>
                    <path d="M778 437h10l11 9.500h39l11-9.500h8" stroke="#eee620" stroke-width="2"/>

                    <!-- second transfer -->
                    <path d="M858 324h70v7h-70z" fill="#d4d8e6"/>
                    <path d="M858 329h70v3h-70z" fill="#fff"/>
                    <path d="M858 332h70v94h-70z" fill="url(#p-roll)"/>
                    <path d="M858 425h70v4h-70z" fill="#eee"/>
                    <path d="M862 331v98M927 324v107" stroke="#aaa" stroke-width="3"/>
                    <path d="M858 377h70" stroke="#000"/>
                    <path d="M865 427h60" stroke-width="3" stroke-dasharray="1 4"/>

                    <!-- edge grinder 1 -->
                    <path d="M951 294h89v19h22v122H932V312h19z" fill="#fff"/>
                    <path d="M951 294h89v5h-89zM1043 313h19v4h-19z" fill="#c9cee4"/>
                    <path d="M922 304h6l1-6v6h37v4h-34v10h-6z" fill="#c9cee4"/>
                    <path d="M954 299h86v18h-86z" fill="#e2e2e2"/>
                    <path d="M932 318h35v40h-35zM932 362h35v60h-35zM1028 377h34v45h-34z" fill="#dedede"/>
                    <path d="M1028 318h34v40h-34zM1028 362h34v15h-34z" fill="#fff"/>
                    <path d="M967 308h61v114h-61z" fill="#fff"/>
                    <path d="M979 303h37M979 305v117M1015 305v117M932 376h35M1028 376h34M932 406h35M1028 406h34M979 368h36M979 373h36M979 399h36M979 403h36M997 310v28M997 372v42M932 318h35M1028 318h34"/>
                    <path d="M990 310v30M1005 310v30M990 366v52M1005 366v52" stroke="#999" stroke-width="2"/>
                    <path d="M932 392h130" stroke="#000" stroke-width="1.600"/>
                    <path d="M932 358h131v4H932zM932 422h131v4H932z" fill="#eee"/>
                    <path d="M950 339h95v18h-95zM950 428h95v17h-95z" fill="#ccc"/>
                    <path d="M960 340h75v16h-75z" fill="url(#p-motor)" stroke="none"/>
                    <path d="M960 429h75v15h-75z" fill="url(#p-motor-low)" stroke="none"/>
                    <path d="M960 345h12v9h-12zM975 345h12v9h-12zM1005 340h10v15h-10zM1020 345h12v9h-12zM960 431h12v8h-12zM975 431h12v8h-12zM1005 429h10v15h-10zM1020 431h12v8h-12zM1010 332h4v8h-4zM1010 445h4v6h-4z" fill="#161616"/>
                    <path d="M937 343h6v6h-6zM937 435h6v6h-6z" fill="#fff" stroke="#111" stroke-width="1.500"/>
                    <path d="M1051 322h9M1055 319v7" stroke="#111" stroke-width="3"/>
                    <path d="M1045 347h20l7 11h-27zM1045 428h30l-6 9h-24z" fill="#e6e6e6"/>
                    <path d="M1062 388h16v4h-16z" fill="#222"/>
                    <path d="M1062 358h16M1062 419h16" stroke="#c9cee4" stroke-width="4"/>
                    <path d="M1062 361h16M1062 423h16" stroke="#b04040"/>

                    <!-- buffer conveyor -->
                    <path d="M1080 324h48v9h-48zM1077 333h57v4h-57z" fill="#c9cee4"/>
                    <path d="M1083 328h45v3h-45zM1079 337h55v4h-55z" fill="#fff"/>
                    <path d="M1079 341h55v85h-55z" fill="url(#p-thin)"/>
                    <path d="M1079 383h55M1079 426h55" stroke="#000" stroke-width="2"/>
                    <path d="M1104 343h5v6h-5z" fill="#111"/>

                    <!-- inspection table -->
                    <path d="M1155 324h67v9h-67zM1134 320h12v10h-12zM1134 330h10v96h-10z" fill="#c9cee4"/>
                    <path d="M1158 328h64v4h-64zM1144 337h78v5h-78z" fill="#fff"/>
                    <path d="M1144 342h78v81h-78z" fill="url(#p-dense)"/>
                    <path d="M1160 352h50v60h-50z" fill="#8a8f9c" opacity=".4"/>
                    <path d="M1144 380h78M1150 415h66M1164 343v80M1174 343v80M1192 343v80M1214 343v80" stroke="#000" stroke-width="1.300"/>
                    <path d="M1170 355h30M1170 400h30M1168 355v50M1196 355v50" stroke="#f4f4f6"/>
                    <path d="M1139 322h5v101h-5z" fill="#555"/>
                    <path d="M1141 322v16M1146 360v8M1189 362v6M1189 402v8" stroke="#000" stroke-width="3"/>
                    <path d="M1184 344v78M1201 344v78M1141 345v78" stroke="#0b7a3c" stroke-width="1.400"/>
                    <path d="M1223 343v80" stroke="#2be03c" stroke-width="2.500"/>
                    <path d="M1136 423h93v10h-93z" fill="#fff"/>
                    <path d="M1208 433h6v10h-6z" fill="#c9cee4"/><path d="M1211 437h10v9h-10z" fill="#fff" stroke="#111" stroke-width="1.500"/><path d="M1213 443h6" stroke-width="2"/>
                  </g>
                  <g class="lamps">
                    <circle cx="595" cy="468" r="8"/><circle cx="815" cy="468" r="8"/><circle cx="1053" cy="468" r="8"/><circle cx="1212" cy="468" r="8"/>
                  </g>
                </svg>

                <div class="stations">
                  <section>
                    <h3>2#磨边</h3>
                    <div class="switches"><button class="start" type="button">启动</button><button class="stop" type="button">停止</button></div>
                    <div class="params">
                      <label><span>输送速度</span><input type="text" value="${四段_速度"><em>m/min</em></label>
                      <label><span>磨边速度</span><input type="text" value="${磨边速度"><em>m/min</em></label>
                      <label><span>固定压紧架</span><input type="text" value="${固定压紧架"><em>m/min</em></label>
                      <label><span>移动压紧架</span><input type="text" value="${移动压紧架"><em>m/min</em></label>
                      <label><span>固定上倒角</span><input type="text" value="${固定上倒角"><em>m/min</em></label>
                      <label><span>移动上倒角</span><input type="text" value="${移动上倒角"><em>m/min</em></label>
                    </div>
                  </section>
                  <section>
                    <h3>转台</h3>
                    <div class="switches"><button class="start" type="button">启动</button><button class="stop" type="button">停止</button></div>
                    <div class="params single">
                      <label><span>输送速度</span><input type="text" value="${三段_速度"><em>m/min</em></label>
                    </div>
                  </section>
                  <section>
                    <h3>1#磨边</h3>
                    <div class="switches"><button class="start" type="button">启动</button><button class="stop" type="button">停止</button></div>
                    <div class="params">
                      <label><span>输送速度</span><input type="text" value="${二段_速度"><em>m/min</em></label>
                      <label><span>磨边速度</span><input type="text" value="${磨边速度_"><em>m/min</em></label>
                      <label><span>固定压紧架</span><input type="text" value="${固定压紧架"><em>m/min</em></label>
                      <label><span>移动压紧架</span><input type="text" value="${移动压紧架"><em>m/min</em></label>
                      <label><span>固定上倒角</span><input type="text" value="${固定上倒角"><em>m/min</em></label>
                      <label><span>移动上倒角</span><input type="text" value="${移动上倒角"><em>m/min</em></label>
                    </div>
                  </section>
                  <section>
                    <h3>检测台</h3>
                    <div class="switches"><button class="start" type="button">启动</button><button class="stop" type="button">停止</button></div>
                    <div class="params single">
                      <label><span>输送速度</span><input type="text" value="${一段_速度"><em>m/min</em></label>
                    </div>
                  </section>
                </div>
              </div>
            </div>

            <div class="board-foot">
              <button type="button" aria-label="收起面板"><svg viewBox="0 0 16 16"><path d="M8 3L3 8l5 5M13.500 3l-5 5 5 5" stroke-width="1.800"/></svg></button>
              <div class="track"><div class="thumb"></div></div>
            </div>
          </div>
        </main>

        <aside class="props">
          <div class="prop-tabs">
            <button type="button" class="active">样式</button>
            <button type="button">动画</button>
            <button type="button">事件</button>
          </div>
          <div class="prop">
            <label for="canvas-name">画布</label>
            <input id="canvas-name" class="grow" type="text" value="画布">
          </div>
          <div class="prop">
            <label for="canvas-w">W</label>
            <input id="canvas-w" type="text" value="1920">
            <svg class="link" viewBox="0 0 20 12"><use href="#i-link"/></svg>
            <label for="canvas-h">H</label>
            <input id="canvas-h" type="text" value="1080">
            <button class="preset" type="button">预设尺寸</button>
          </div>
          <div class="prop">
            <span>背景</span>
            <button class="swatch" type="button" aria-label="背景颜色"></button>
            <button class="pic" type="button" aria-label="背景图片"><svg viewBox="0 0 16 16"><use href="#i-image"/></svg></button>
          </div>
          <div class="prop params-box">
            <h2>页面参数<svg class="icon" viewBox="0 0 16 16"><path d="M2 5l6 6 6-6"/></svg></h2>
            <button class="add" type="button"><svg viewBox="0 0 12 12"><path d="M6 .5v11M.5 6h11" stroke-width="1.400"/></svg>添加参数</button>
          </div>
        </aside>
      </div>
    </div>
  </div>
</body>
</html>
```

FILE: styles.css
```css
* {
  box-sizing: border-box;
}

body {
  margin: 0;
  height: 100vh;
  display: flex;
  flex-direction: column;
  overflow: hidden;
  background: #26262a;
  color: #d0d0d0;
  font: 12px/16px "Noto Sans", "Noto Sans CJK SC", sans-serif;
}

button, input, select {
  font: inherit;
  color: inherit;
  border: none;
  padding: 0;
  margin: 0;
  background: none;
}

h1, h2, h3, ul {
  margin: 0;
  padding: 0;
  font-weight: normal;
  list-style: none;
}

svg {
  fill: none;
  stroke: currentColor;
  flex: none;
}

.sprite {
  position: absolute;
  width: 0;
  height: 0;
}

.icon {
  width: 16px;
  height: 16px;
}

.icon-s {
  width: 10px;
  height: 10px;
}

.gold { color: #f3b469; }
.faint { color: #66666a; }
.dim { color: #77777a; }

/* title bar */
.titlebar {
  flex: none;
  height: 38px;
  display: grid;
  grid-template-columns: 86px 1fr auto 1fr;
  align-items: center;
}

.brand {
  width: 20px;
  height: 20px;
  margin-left: 23px;
  stroke-linecap: round;
}

.run {
  width: 90px;
  height: 26px;
  display: flex;
  align-items: center;
  justify-content: space-between;
  padding: 0 8px 0 13px;
  background: #37383b;
  border-radius: 5px;
  color: #fff;
}

.run-btn {
  display: flex;
  align-items: center;
  gap: 4px;
}

.run-more {
  width: 16px;
  height: 16px;
  background: #45464a;
  border-radius: 2px;
  display: grid;
  place-items: center;
}

.doc-title {
  display: flex;
  flex-direction: column-reverse;
  align-items: center;
  margin-left: -86px;
}

.version {
  font-size: 8px;
  line-height: 8px;
  order: 1;
}

.doc-title h1 {
  font-size: 14px;
  line-height: 14px;
}

.window-actions {
  display: flex;
  justify-content: flex-end;
  padding-right: 10px;
}

.window-actions button {
  width: 40px;
  height: 20px;
}

.window-actions .win-first {
  margin-left: 21px;
}

.window-actions svg {
  width: 20px;
  height: 20px;
  stroke-width: 1.4;
}

/* left navigation */
.app {
  flex: 1;
  min-height: 0;
  display: flex;
}

.side-nav {
  width: 60px;
  flex: none;
  background: #2a2c2e;
  border-right: 1px solid #111;
}

.side-nav button {
  width: 100%;
  height: 60px;
  display: flex;
  flex-direction: column;
  align-items: center;
  gap: 5px;
  padding-top: 9px;
  font-size: 14px;
  line-height: 20px;
}

.side-nav svg {
  width: 18px;
  height: 18px;
  stroke-width: 1.5;
}

.side-nav .bold {
  stroke-width: 2;
}

.side-nav .active {
  background: #3f70ff;
  color: #fff;
}

.content {
  flex: 1;
  min-width: 0;
  display: flex;
  flex-direction: column;
}

/* toolbar */
.toolbar {
  flex: none;
  height: 60px;
  display: flex;
  background: #282a2b;
  border: 1px solid #444;
  border-left-width: 0;
}

.scroll-btn {
  width: 16px;
  flex: none;
  background: #111;
  display: grid;
  place-items: center;
  color: #888;
}

.chev {
  width: 8px;
  height: 16px;
}

.tools {
  flex: 1;
  min-width: 0;
  display: flex;
  overflow: hidden;
}

.group {
  display: flex;
  flex: none;
  padding: 0 8px;
  border-right: 1px solid #444;
}

.group:last-child {
  border-right: none;
}

.group.first {
  width: 74px;
  justify-content: center;
}

.tools button, .view-tools button, .zoom {
  flex: none;
  display: flex;
  flex-direction: column;
  align-items: center;
  gap: 8px;
  padding: 10px 8px 0;
  white-space: nowrap;
}

.tools svg, .view-tools button svg {
  width: 16px;
  height: 16px;
}

.lit {
  display: grid;
  place-items: center;
  width: 24px;
  height: 24px;
  margin: -4px 0;
  border-radius: 4px;
  background: #604d38;
}

.view-tools {
  flex: none;
  width: 186px;
  display: flex;
  padding-left: 17px;
}

.view-tools button {
  padding: 10px 3px 0;
}

.zoom {
  padding: 6px 3px 0;
  gap: 6px;
}

.zoom-box {
  display: flex;
  align-items: center;
  width: 52px;
  height: 22px;
  padding: 0 5px 0 8px;
  background: #181a19;
  border-radius: 3px;
  color: #aaa;
}

.zoom-box select {
  appearance: none;
  width: 29px;
}

.view-tools .fold {
  margin: 6px 0 0 7px;
  padding: 3px;
  width: 22px;
  height: 22px;
  background: #333635;
}

.workbench {
  flex: 1;
  min-height: 0;
  display: flex;
}

/* pages and objects */
.left-panel {
  width: 230px;
  flex: none;
  display: flex;
  flex-direction: column;
  background: #202020;
  border-left: 1px solid #111;
  border-right: 1px solid #181818;
}

.pages {
  flex: 1 1 0;
  min-height: 0;
  overflow: hidden;
}

.objects {
  flex: 0 0 50%;
  overflow: hidden;
}

.panel-head {
  height: 36px;
  display: flex;
  align-items: center;
  gap: 8px;
  padding: 0 8px 0 13px;
  background: #2c2c2e;
  border: solid #181818;
  border-width: 1px 0;
  font-size: 12px;
}

.fold-panel {
  margin-left: auto;
  height: 16px;
}

.search-row {
  display: flex;
  align-items: center;
  gap: 10px;
  padding: 10px 9px 13px;
}

.search-row input {
  flex: 1;
  min-width: 0;
  height: 27px;
  background: #141414;
  border: 1px solid #252525;
  border-bottom-color: #555;
  border-radius: 3px;
}

.search-row button {
  height: 16px;
  color: #858585;
}

.search-row input + button {
  margin-left: -3px;
}

.tree li {
  height: 32px;
  display: flex;
  align-items: center;
  margin: 0 8px 0 5px;
  padding-left: 8px;
}

.tree .l1 { padding-left: 26px; }
.tree .l2 { padding-left: 44px; }

.tree .icon, .tree .num {
  margin: 0 12px 0 13px;
}

.tight .icon, .tight .num {
  margin-right: 8px;
}

.tight .icon {
  color: #999;
}

.tight .bright {
  color: #ddd;
}

.num {
  width: 16px;
  font-family: "Roboto", sans-serif;
  font-size: 10px;
  color: #999;
}

.caret {
  width: 8px;
  border: 4px solid transparent;
  border-top-color: #ccc;
  border-bottom: none;
}

.caret.none {
  border-top-color: transparent;
}

.tree .active {
  color: #f3b469;
  background: linear-gradient(90deg, #202020, #4f4130);
}

/* editor area */
.stage {
  flex: 1;
  min-width: 0;
  display: flex;
  flex-direction: column;
}

.tabs {
  flex: none;
  display: flex;
  gap: 2px;
  height: 22px;
  background: #101010;
}

.tabs button {
  width: 100px;
  height: 20px;
  background: #1e1e1e;
  color: #858585;
  display: flex;
  align-items: center;
  justify-content: center;
  gap: 12px;
}

.tabs .active {
  background: #4a3e32;
  color: #f3b469;
  padding-left: 18px;
}

.tabs svg {
  width: 8px;
  height: 8px;
}

.board {
  position: relative;
  flex: 1;
  min-height: 0;
  display: flex;
  flex-direction: column;
  background: #3e3e3e;
}

.float-tools {
  position: absolute;
  left: 10px;
  top: 11px;
  display: flex;
  flex-direction: column;
  width: 36px;
  background: #252628;
  border-radius: 8px;
  box-shadow: 0 1px 5px #2a2a2a;
  color: #fff;
}

.float-tools button {
  height: 36px;
  display: grid;
  place-items: center;
}

.float-tools svg {
  width: 17px;
  height: 17px;
  stroke-width: 1.3;
}

.board-foot {
  margin-top: auto;
  display: flex;
  align-items: flex-end;
}

.board-foot button {
  width: 26px;
  height: 26px;
  background: #242625;
  display: grid;
  place-items: center;
  color: #eee;
}

.board-foot svg {
  width: 14px;
  height: 14px;
}

.track {
  flex: 1;
  padding: 0 29px 1px 0;
}

.thumb {
  height: 7px;
  border: 1px solid #888;
  border-left: none;
  border-radius: 0 4px 4px 0;
  background: #4a4a4a;
}

/* the page being edited */
.screen {
  margin: 116px 20px 0 50px;
  display: grid;
  grid-template-columns: 65px 1fr;
  grid-template-rows: 35px 1fr;
  background: #fff;
  box-shadow: 1px 1px 3px #222;
  color: #222;
  font-size: 10px;
}

.screen-head {
  grid-column: 1 / -1;
  display: grid;
  grid-template-columns: 1fr 224px 1fr;
  align-items: center;
  background: #6990b8;
  color: #fff;
}

.logo {
  padding-left: 9px;
  font: bold 16px/20px "Open Sans", sans-serif;
}

.banner {
  align-self: stretch;
  background: #131b23;
  clip-path: polygon(0 0, 100% 0, 75% 100%, 25% 100%);
  text-align: center;
  font-size: 16px;
  font-weight: bold;
  line-height: 30px;
}

.clock {
  padding: 0 8px 4px 0;
  text-align: right;
  font: 600 8px/12px "Open Sans", sans-serif;
}

.screen-menu {
  display: flex;
  flex-direction: column;
  background: #6990b8;
  padding: 9px 0 10px;
}

.screen-menu a {
  display: flex;
  flex-direction: column;
  align-items: center;
  height: 64px;
  color: #fff;
  font-weight: 600;
  text-decoration: none;
}

.screen-menu svg {
  width: 18px;
  height: 18px;
  stroke-width: 1.2;
}

.screen-menu .exit {
  margin-top: auto;
  height: auto;
  gap: 2px;
}

.screen-menu .exit svg {
  width: 30px;
  height: 24px;
}

.line {
  display: block;
  width: 100%;
}

.line pattern [fill] {
  stroke: none;
}

.glow {
  stroke: #333;
  stroke-width: .8;
  filter: drop-shadow(0 0 2px #3f7cc0);
}

.lamps {
  fill: #b4b4b4;
  stroke: #f0f0f0;
  stroke-width: 2;
}

.stations {
  display: grid;
  grid-template-columns: repeat(4, 1fr);
  padding: 0 1px 8px 0;
}

.stations section {
  display: flex;
  flex-direction: column;
}

.stations h3 {
  height: 26px;
  padding: 7px 10px 0;
  font-size: 10px;
  font-weight: 500;
}

.switches {
  display: flex;
  align-items: center;
  gap: 20px;
  height: 43px;
  padding-left: 39px;
  background: #fbfbfb;
  border: solid #e8e8e8;
  border-width: 1px 1px 2px;
}

.switches button {
  width: 62px;
  height: 26px;
  border-radius: 2px;
  color: #fff;
  font-weight: bold;
}

.start { background: #1bae5d; }
.stop { background: #555; }

.params {
  flex: 1;
  min-height: 198px;
  display: flex;
  flex-direction: column;
  justify-content: space-between;
  padding: 9px 0 14px 27px;
  border: 1px solid #e8e8e8;
  border-top: none;
}

.params.single {
  justify-content: center;
  padding: 0 0 0 27px;
}

.params label {
  display: flex;
  align-items: center;
  width: 169px;
  height: 26px;
  padding-left: 10px;
  background: #dadada;
}

.params span {
  width: 53px;
  text-align: center;
}

.params input {
  width: 66px;
  height: 20px;
  padding: 0 5px;
  background: #fff;
  border: 1px solid #aaa;
  border-radius: 2px;
}

.params em {
  margin-left: 6px;
  font-style: normal;
  color: #555;
}

/* property panel */
.props {
  width: 280px;
  flex: none;
  background: #252726;
  border-right: 1px solid #000;
}

.prop-tabs {
  display: grid;
  grid-template-columns: repeat(3, 1fr);
  justify-items: center;
  height: 37px;
  background: #333534;
  border-bottom: 1px solid #000;
  font-size: 14px;
  color: #888;
}

.prop-tabs button {
  width: 46px;
  border-bottom: 2px solid transparent;
}

.prop-tabs .active {
  color: #fff;
  font-weight: 500;
  border-color: #1f6fe8;
}

.prop {
  display: flex;
  align-items: center;
  gap: 4px;
  min-height: 56px;
  padding: 0 11px 0 10px;
  border-bottom: 1px solid #000;
  color: #858585;
}

.prop-tabs + .prop {
  min-height: 49px;
}

.prop input {
  width: 54px;
  height: 26px;
  padding: 0 8px;
  background: #141414;
  border-radius: 3px;
  color: #ddd;
}

.prop .grow {
  flex: 1;
}

.link {
  width: 20px;
  height: 12px;
  margin: 0 3px 0 6px;
}

.link + label {
  margin-right: 2px;
}

.preset {
  width: 68px;
  height: 26px;
  margin-left: auto;
  background: #3a3a3b;
  border-radius: 3px;
  color: #ddd;
}

.swatch {
  width: 18px;
  height: 18px;
  margin: 0 7px 0 5px;
  border-radius: 50%;
  background: #fff;
}

.pic, .pic svg {
  width: 20px;
  height: 20px;
}

.params-box {
  min-height: 80px;
  flex-direction: column;
  align-items: stretch;
  gap: 10px;
  padding: 15px 10px 14px;
}

.params-box h2 {
  display: flex;
  justify-content: space-between;
  align-items: center;
  font-size: 14px;
  line-height: 20px;
  color: #ccc;
}

.params-box .icon {
  width: 12px;
  height: 12px;
}

.add {
  display: flex;
  align-items: center;
  justify-content: center;
  gap: 4px;
  height: 20px;
  margin: 0 41px;
  background: #333436;
  border-radius: 2px;
  color: #ccc;
}

.add svg {
  width: 11px;
  height: 11px;
}
```
